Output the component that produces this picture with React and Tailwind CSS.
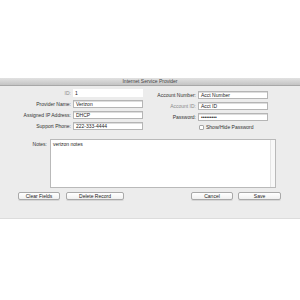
import { useState } from 'react';

const Field = ({ label, value, labelW, dim = false, bare = false }) => (
  <div className="flex items-center h-[8px]">
    <span className={`shrink-0 text-right pr-[2px] ${labelW} ${dim ? 'text-[#8a8a8a]' : 'text-[#333]'}`}>{label}</span>
    <div
      className={`w-[70px] h-[8px] px-[2px] flex items-center bg-white ${
        bare ? '' : 'border border-[#b5b5b5] shadow-[inset_0_1px_0_#ddd]'
      } text-[#222]`}
    >
      {value}
    </div>
  </div>
);

const Btn = ({ children, w }) => (
  <button className={`${w} h-[8px] flex items-center justify-center rounded-[2px] border border-[#a9a9a9] bg-gradient-to-b from-white to-[#f0f0f0] text-[#222] leading-none shadow-[0_1px_0_#d6d6d6]`}>
    {children}
  </button>
);

export default function App() {
  const [show, setShow] = useState(false);

  return (
    <div className="w-[300px] h-[300px] bg-white pt-[78px] text-[5px] leading-none font-['Liberation_Sans',Arial,sans-serif]">
      {/* title bar */}
      <div className="h-[8px] flex items-center justify-center bg-gradient-to-b from-[#e2e2e2] to-[#c4c4c4] border-b border-[#a8a8a8] text-[#444]">
        Internet Service Provider
      </div>

      {/* body */}
      <div className="h-[133px] bg-[#ececec] border-b border-[#dcdcdc]">
        <div className="flex">
          <div className="w-[145px] pt-[3px] flex flex-col gap-[3px]">
            <Field label="ID:" value="1" labelW="w-[73px]" dim bare />
            <Field label="Provider Name:" value="Verizon" labelW="w-[73px]" />
            <Field label="Assigned IP Address:" value="DHCP" labelW="w-[73px]" />
            <Field label="Support Phone:" value="222-333-4444" labelW="w-[73px]" />
          </div>
          <div className="pt-[5px] flex flex-col gap-[3px]">
            <Field label="Account Number:" value="Acct Number" labelW="w-[53px]" />
            <Field label="Account ID:" value="Acct ID" labelW="w-[53px]" dim />
            <Field label="Password:" value="•••••••••" labelW="w-[53px]" />
            <label className="flex items-center gap-[2px] h-[7px] pl-[54px] text-[#333]">
              <span
                onClick={() => setShow(!show)}
                className="w-[5px] h-[5px] border border-[#a8a8a8] bg-white rounded-[1px]"
              />
              Show/Hide Password
            </label>
          </div>
        </div>

        <div className="flex mt-[8px]">
          <span className="w-[50px] pr-[3px] pt-[3px] text-right text-[#333]">Notes:</span>
          <div className="w-[226px] h-[49px] flex bg-white border border-[#b9b9b9]">
            <div className="flex-1 p-[2px] text-[#222]">verizon notes</div>
            <div className="w-[5px] border-l border-[#e4e4e4] bg-[#f8f8f8]" />
          </div>
        </div>

        <div className="flex mt-[4px] pl-[18px]">
          <div className="flex gap-[6px]">
            <Btn w="w-[42px]">Clear Fields</Btn>
            <Btn w="w-[58px]">Delete Record</Btn>
          </div>
          <div className="flex gap-[5px] ml-[67px]">
            <Btn w="w-[42px]">Cancel</Btn>
            <Btn w="w-[43px]">Save</Btn>
          </div>
        </div>
      </div>
    </div>
  );
}
